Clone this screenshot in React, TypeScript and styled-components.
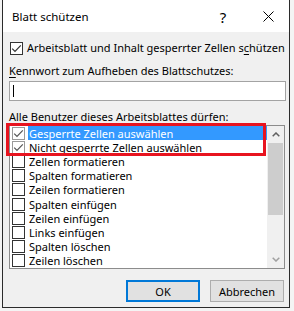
import React from "react";
import styled, { createGlobalStyle } from "styled-components";

const GlobalStyle = createGlobalStyle`
  html, body { margin: 0; padding: 0; }
  body {
    background: #f4f4f4;
    font-family: "Noto Sans", "DejaVu Sans", sans-serif;
    font-size: 11px;
    color: #000;
  }
`;

const Page = styled.div`
  padding-left: 2px;
  height: 311px;
  box-sizing: border-box;
`;

const Dialog = styled.div`
  width: 288px;
  height: 308px;
  box-sizing: border-box;
  border: 1px solid #2b2b2b;
  border-top: none;
  background: #f0f0f0;
  display: flex;
  flex-direction: column;
`;

const TitleBar = styled.div`
  height: 32px;
  box-sizing: border-box;
  padding: 1px 0 0 9px;
  background: #fff;
  display: flex;
  align-items: center;
`;

const Title = styled.div`
  flex: 1;
  font-size: 11.5px;
`;

const HelpButton = styled.div`
  width: 14px;
  margin-right: 18px;
  text-align: center;
  font-size: 15px;
  line-height: 16px;
`;

const CloseButton = styled.div`
  width: 40px;
  margin-right: 1px;
  display: flex;
  justify-content: center;
  align-items: center;
`;

const Body = styled.div`
  flex: 1;
  display: flex;
  flex-direction: column;
  padding: 9px 3px 0 6px;
`;

const CheckRow = styled.label`
  display: flex;
  align-items: center;
  height: 14px;
  margin-left: 1px;
  gap: 4px;
  line-height: 14px;
`;

const Box = styled.span<{ $muted?: boolean }>`
  width: 13px;
  height: 13px;
  box-sizing: border-box;
  flex: none;
  border: 1px solid ${(p) => (p.$muted ? "#9a9a9a" : "#333")};
  background: #fff;
  display: flex;
  align-items: center;
  justify-content: center;
`;

const FieldLabel = styled.div`
  margin-top: 8px;
  line-height: 16px;
`;

const Key = styled.span`
  text-decoration: underline;
  text-underline-offset: 2px;
`;

const PasswordField = styled.div`
  margin-top: 2px;
  height: 20px;
  box-sizing: border-box;
  border: 1px solid #a3a3a3;
  background: #fff;
  display: flex;
  align-items: center;
  padding-left: 3px;
`;

const Caret = styled.span`
  width: 1px;
  height: 12px;
  background: #000;
`;

const ListWrap = styled.div`
  position: relative;
  margin-right: 1px;
`;

const ListBox = styled.div`
  height: 144px;
  box-sizing: border-box;
  border: 1px solid #8c8c8c;
  background: #fff;
  display: flex;
`;

const Items = styled.div`
  flex: 1;
  display: flex;
  flex-direction: column;
  overflow: hidden;
`;

const Row = styled.div`
  height: 14.2px;
  flex: none;
  display: flex;
  align-items: center;
  padding-left: 2px;
`;

const RowLabel = styled.span<{ $selected?: boolean }>`
  flex: 1;
  height: 100%;
  margin-left: 3px;
  padding-left: 1px;
  display: flex;
  align-items: center;
  white-space: nowrap;
  background: ${(p) => (p.$selected ? "#3399ff" : "transparent")};
  color: ${(p) => (p.$selected ? "#fff" : "#000")};
`;

const ScrollBar = styled.div`
  width: 17px;
  flex: none;
  background: #f0f0f0;
  display: flex;
  flex-direction: column;
`;

const ScrollArrow = styled.div`
  height: 17px;
  flex: none;
  display: flex;
  align-items: center;
  justify-content: center;
`;

const Thumb = styled.div`
  height: 72px;
  margin: 0 1px;
  background: #cdcdcd;
`;

const Spacer = styled.div`
  flex: 1;
`;

const RedMark = styled.div`
  position: absolute;
  left: -3px;
  top: -2px;
  width: 260px;
  height: 33px;
  box-sizing: border-box;
  border: 3px solid #e8141f;
  pointer-events: none;
`;

const Buttons = styled.div`
  margin-top: 11px;
  margin-right: 2px;
  display: flex;
  justify-content: flex-end;
  gap: 10px;
`;

const Button = styled.button<{ $default?: boolean }>`
  width: 74px;
  height: 22px;
  box-sizing: border-box;
  padding: 0;
  font-family: inherit;
  font-size: 11px;
  color: #000;
  background: #e1e1e1;
  border: ${(p) => (p.$default ? "2px solid #0078d7" : "1px solid #adadad")};
`;

const Check = ({ color = "#333" }: { color?: string }) => (
  <svg width="11" height="11" viewBox="0 0 11 11">
    <polyline
      points="1.2,5.6 4,8.4 9.8,2.4"
      fill="none"
      stroke={color}
      strokeWidth="1.2"
    />
  </svg>
);

const CloseIcon = () => (
  <svg width="11" height="11" viewBox="0 0 11 11">
    <path d="M0.5 0.5 L10.5 10.5 M10.5 0.5 L0.5 10.5" stroke="#000" strokeWidth="1" />
  </svg>
);

const Chevron = ({ up, color }: { up?: boolean; color: string }) => (
  <svg width="8" height="5" viewBox="0 0 8 5">
    <polyline
      points={up ? "0.7,4.3 4,1 7.3,4.3" : "0.7,0.7 4,4 7.3,0.7"}
      fill="none"
      stroke={color}
      strokeWidth="1.5"
    />
  </svg>
);

const items: { label: string; checked?: boolean; selected?: boolean }[] = [
  { label: "Gesperrte Zellen auswählen", checked: true, selected: true },
  { label: "Nicht gesperrte Zellen auswählen", checked: true },
  { label: "Zellen formatieren" },
  { label: "Spalten formatieren" },
  { label: "Zeilen formatieren" },
  { label: "Spalten einfügen" },
  { label: "Zeilen einfügen" },
  { label: "Links einfügen" },
  { label: "Spalten löschen" },
  { label: "Zeilen löschen" },
];

export default function App() {
  return (
    <>
      <GlobalStyle />
      <Page>
        <Dialog>
          <TitleBar>
            <Title>Blatt schützen</Title>
            <HelpButton>?</HelpButton>
            <CloseButton>
              <CloseIcon />
            </CloseButton>
          </TitleBar>
          <Body>
            <CheckRow>
              <Box>
                <Check />
              </Box>
              <span>
                Arbeitsblatt und Inhalt gesperrter Zellen s<Key>c</Key>hützen
              </span>
            </CheckRow>
            <FieldLabel>
              <Key>K</Key>ennwort zum Aufheben des Blattschutzes:
            </FieldLabel>
            <PasswordField>
              <Caret />
            </PasswordField>
            <FieldLabel>
              Alle Benutzer dieses Arbeitsblattes <Key>d</Key>ürfen:
            </FieldLabel>
            <ListWrap>
              <ListBox>
                <Items>
                  {items.map((it) => (
                    <Row key={it.label}>
                      <Box $muted={it.checked}>
                        {it.checked && <Check color="#555" />}
                      </Box>
                      <RowLabel $selected={it.selected}>{it.label}</RowLabel>
                    </Row>
                  ))}
                </Items>
                <ScrollBar>
                  <ScrollArrow>
                    <Chevron up color="#606060" />
                  </ScrollArrow>
                  <Thumb />
                  <Spacer />
                  <ScrollArrow>
                    <Chevron color="#a0a0a0" />
                  </ScrollArrow>
                </ScrollBar>
              </ListBox>
              <RedMark />
            </ListWrap>
            <Buttons>
              <Button $default>OK</Button>
              <Button>Abbrechen</Button>
            </Buttons>
          </Body>
        </Dialog>
      </Page>
    </>
  );
}
